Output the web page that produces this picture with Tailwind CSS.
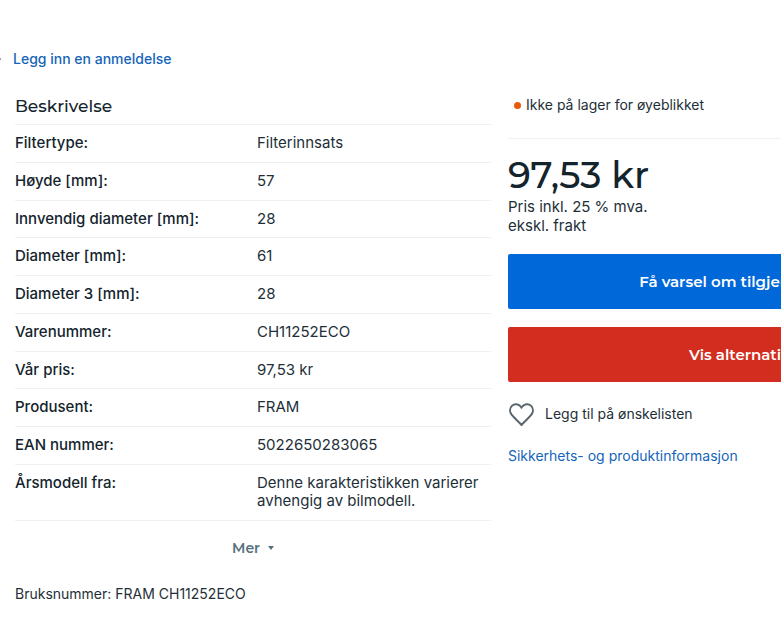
<!DOCTYPE html>
<html lang="no">
<head>
    <meta charset="UTF-8">
    <meta name="viewport" content="width=device-width, initial-scale=1.0">
    <title>FRAM CH11252ECO - Filterinnsats</title>
    <script src="https://cdn.jsdelivr.net/npm/@tailwindcss/browser@4"></script>
</head>
<body class="bg-white font-['Inter',sans-serif] text-[15px] leading-[18px] text-[#1e2f38] overflow-x-hidden">
    <!-- Review link -->
    <div class="flex items-center gap-3 pt-[50px]">
        <span class="w-px h-0.5 bg-gray-400"></span>
        <a href="#" class="text-sm leading-[18px] font-medium text-[#1565b8] hover:underline">Legg inn en anmeldelse</a>
    </div>

    <main class="flex gap-[17px] pl-[15px] pt-6">
        <!-- Description -->
        <section class="flex-1 min-w-[476px]">
            <h2 class="font-['Montserrat','Inter',sans-serif] text-[17px] leading-6 font-medium pt-0.5 pb-1.5 text-[#14242d]">Beskrivelse</h2>
            <table class="w-full h-[397px] table-fixed border-collapse border-y border-[#eef1f3]">
                <tbody class="divide-y divide-[#eef1f3]">
                    <tr>
                        <th scope="row" class="w-[242px] py-[9px] text-left align-top font-medium text-[#14242d]">Filtertype:</th>
                        <td class="py-[9px] align-top">Filterinnsats</td>
                    </tr>
                    <tr>
                        <th scope="row" class="py-[9px] text-left align-top font-medium text-[#14242d]">Høyde [mm]:</th>
                        <td class="py-[9px] align-top">57</td>
                    </tr>
                    <tr>
                        <th scope="row" class="py-[9px] text-left align-top font-medium text-[#14242d]">Innvendig diameter [mm]:</th>
                        <td class="py-[9px] align-top">28</td>
                    </tr>
                    <tr>
                        <th scope="row" class="py-[9px] text-left align-top font-medium text-[#14242d]">Diameter [mm]:</th>
                        <td class="py-[9px] align-top">61</td>
                    </tr>
                    <tr>
                        <th scope="row" class="py-[9px] text-left align-top font-medium text-[#14242d]">Diameter 3 [mm]:</th>
                        <td class="py-[9px] align-top">28</td>
                    </tr>
                    <tr>
                        <th scope="row" class="py-[9px] text-left align-top font-medium text-[#14242d]">Varenummer:</th>
                        <td class="py-[9px] align-top">CH11252ECO</td>
                    </tr>
                    <tr>
                        <th scope="row" class="py-[9px] text-left align-top font-medium text-[#14242d]">Vår pris:</th>
                        <td class="py-[9px] align-top">97,53 kr</td>
                    </tr>
                    <tr>
                        <th scope="row" class="py-[9px] text-left align-top font-medium text-[#14242d]">Produsent:</th>
                        <td class="py-[9px] align-top">FRAM</td>
                    </tr>
                    <tr>
                        <th scope="row" class="py-[9px] text-left align-top font-medium text-[#14242d]">EAN nummer:</th>
                        <td class="py-[9px] align-top">5022650283065</td>
                    </tr>
                    <tr>
                        <th scope="row" class="py-[9px] text-left align-top font-medium text-[#14242d]">Årsmodell fra:</th>
                        <td class="py-[9px] align-top">Denne karakteristikken varierer avhengig av bilmodell.</td>
                    </tr>
                </tbody>
            </table>
            <button type="button" class="flex items-center gap-2 mx-auto mt-[17px] font-['Montserrat','Inter',sans-serif] text-sm font-semibold text-[#56707d]">
                Mer
                <svg class="w-1.5 h-1" viewBox="0 0 6 4" fill="currentColor" aria-hidden="true"><path d="M0 0h6L3 4z"/></svg>
            </button>
            <p class="mt-[27px] text-sm leading-[18px]">Bruksnummer: FRAM CH11252ECO</p>
        </section>

        <!-- Price and actions -->
        <aside class="w-[478px] -mr-[205px] shrink-0">
            <p class="flex items-center gap-[5px] pl-1.5 pt-1 pb-6 text-sm leading-[18px] border-b border-[#f0f2f4]">
                <span class="w-[7px] h-[7px] rounded-full bg-[#e8590c]"></span>
                Ikke på lager for øyeblikket
            </p>
            <p class="mt-[13px] font-['Montserrat','Inter',sans-serif] text-[37px] leading-[45px] font-medium text-[#14242d]">97,53 kr</p>
            <p class="leading-[19px]">Pris inkl. 25 % mva.<br>ekskl. frakt</p>
            <button type="button" class="mt-[19px] w-full h-[55px] rounded-xs bg-[#0068d9] font-['Montserrat','Inter',sans-serif] font-semibold text-white">Få varsel om tilgjengelighet</button>
            <button type="button" class="mt-[18px] w-full h-[55px] rounded-xs bg-[#d32d1f] font-['Montserrat','Inter',sans-serif] font-semibold text-white">Vis alternativer</button>
            <button type="button" class="mt-5 flex items-center gap-2.5 text-sm">
                <svg class="w-[27px] h-6" viewBox="0 0 27 24" fill="none" stroke="#5a656c" stroke-width="2" stroke-linejoin="round" aria-hidden="true">
                    <path d="M13.5 23C10 19.200 6.200 16 3.600 12.700C1.400 9.800 1.600 6.200 3.900 3.900C6.500 1.300 10.900 1.800 12.900 4.800L13.500 5.700L14.100 4.800C16.100 1.800 20.500 1.300 23.100 3.900C25.400 6.200 25.600 9.800 23.400 12.700C20.800 16 17 19.200 13.500 23Z"/>
                </svg>
                Legg til på ønskelisten
            </button>
            <a href="#" class="mt-[21px] inline-block text-sm leading-[18px] text-[#1565b8] hover:underline">Sikkerhets- og produktinformasjon</a>
        </aside>
    </main>
</body>
</html>
